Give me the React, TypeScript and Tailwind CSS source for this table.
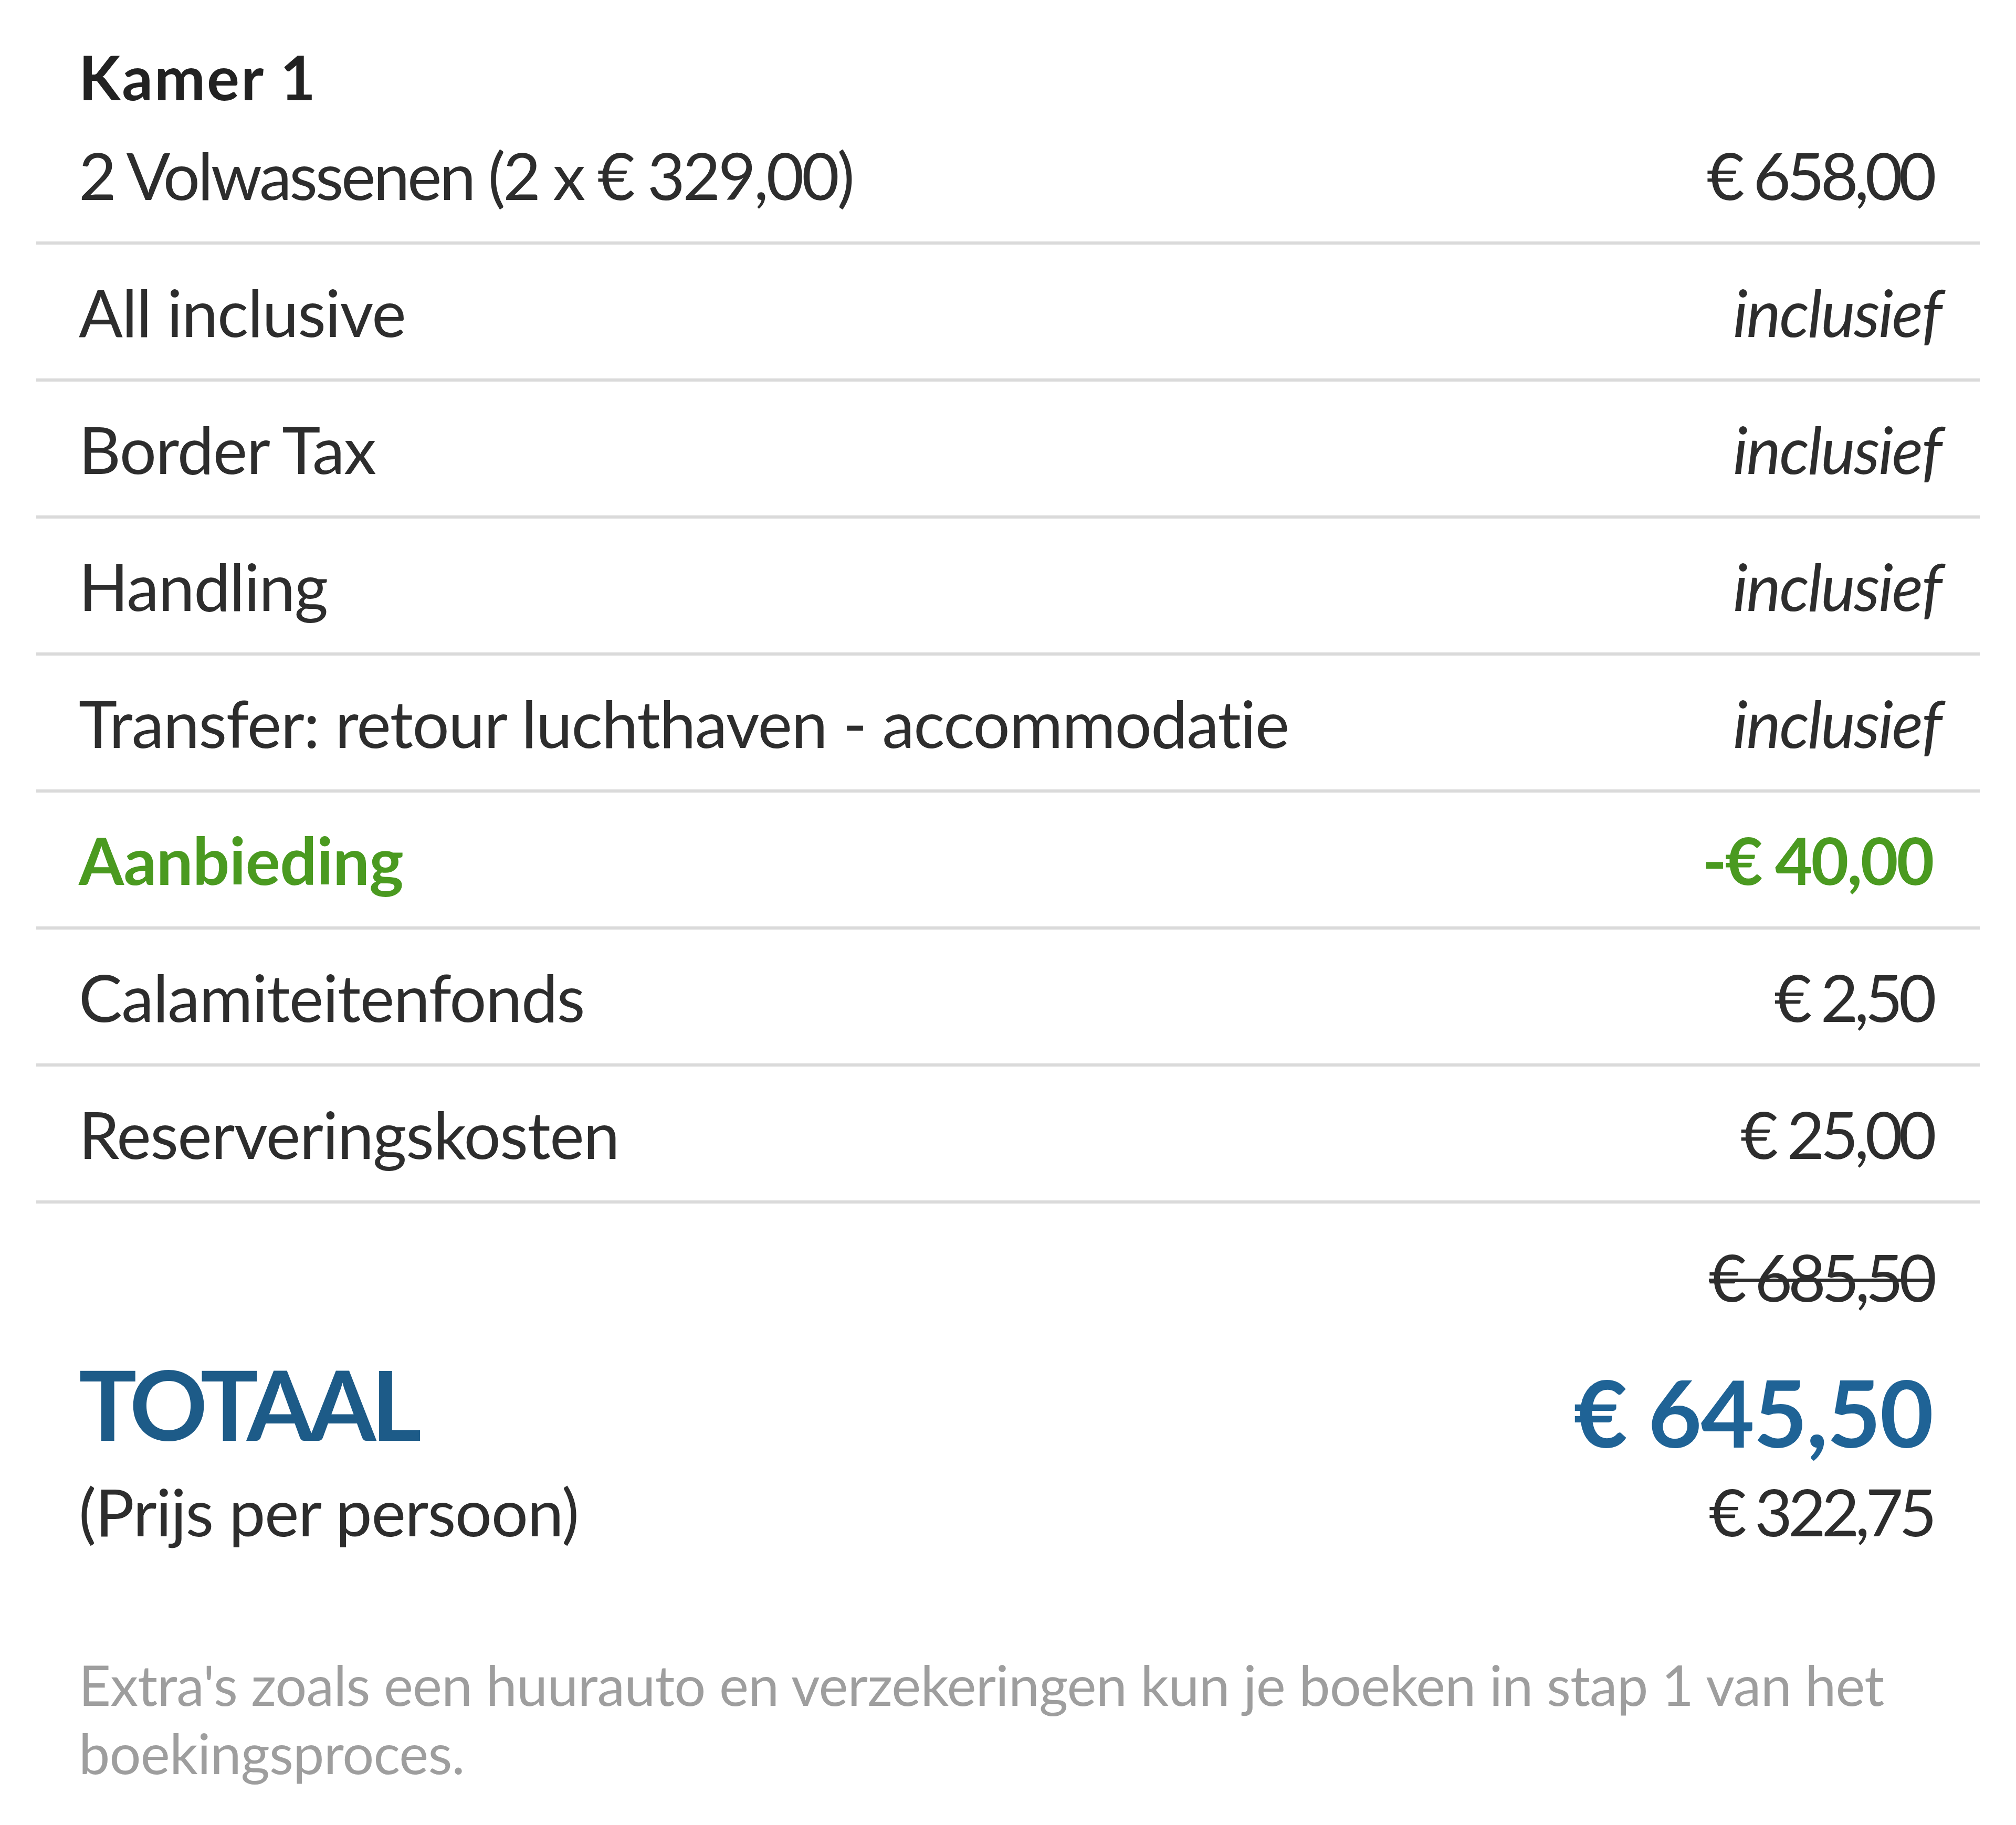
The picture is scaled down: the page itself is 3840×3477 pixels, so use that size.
import React from "react";

type RowProps = {
  label: string;
  value: string;
  variant?: "normal" | "italic" | "green";
};

function Row({ label, value, variant = "normal" }: RowProps) {
  const labelCls =
    variant === "green"
      ? "font-bold tracking-[-0.005em] text-[#4a9a20]"
      : "tracking-[-0.012em] text-[#2d2d2d]";
  const valueCls =
    variant === "green"
      ? "font-bold tracking-[-0.027em] text-[#4a9a20]"
      : variant === "italic"
      ? "-mr-[16px] italic tracking-[-0.022em] text-[#2d2d2d]"
      : "tracking-[-0.062em] text-[#2d2d2d]";
  return (
    <div className="flex h-[261px] items-center justify-between border-b-[6px] border-[#dadada] pl-[81px] pr-[90px] text-[124px] leading-[130px]">
      <span className={labelCls}>{label}</span>
      <span className={valueCls}>{value}</span>
    </div>
  );
}

export default function App() {
  return (
    <div className="min-h-[3477px] w-[3840px] bg-white px-[69px] [font-family:Lato,'Liberation_Sans',sans-serif]">
      {/* Header block */}
      <div className="border-b-[6px] border-[#dadada] pb-[62px] pl-[81px] pr-[90px] pt-[82px]">
        <div className="text-[116px] font-bold leading-[130px] tracking-[0.025em] text-[#222222]">Kamer 1</div>
        <div className="mt-[56px] flex items-center justify-between text-[124px] leading-[130px] text-[#2d2d2d]">
          <span className="tracking-[-0.035em]">2 Volwassenen (2 x € 329,00)</span>
          <span className="tracking-[-0.062em]">€ 658,00</span>
        </div>
      </div>

      <Row label="All inclusive" value="inclusief" variant="italic" />
      <Row label="Border Tax" value="inclusief" variant="italic" />
      <Row label="Handling" value="inclusief" variant="italic" />
      <Row label="Transfer: retour luchthaven - accommodatie" value="inclusief" variant="italic" />
      <Row label="Aanbieding" value="-€ 40,00" variant="green" />
      <Row label="Calamiteitenfonds" value="€ 2,50" />
      <Row label="Reserveringskosten" value="€ 25,00" />

      {/* Totals */}
      <div className="pl-[81px] pr-[90px]">
        <div className="mt-[74px] flex justify-end text-[124px] leading-[130px] text-[#2d2d2d]">
          <span className="tracking-[-0.066em] line-through decoration-[6px]">€ 685,50</span>
        </div>
        <div className="mt-[77px] flex h-[200px] items-start justify-between">
          <span className="text-[184px] font-bold leading-[200px] tracking-[-0.05em] text-[#1d5b88]">TOTAAL</span>
          <span className="mt-[32px] text-[177px] font-bold leading-[168px] tracking-[-0.012em] text-[#1f6396]">€ 645,50</span>
        </div>
        <div className="mt-[40px] flex items-center justify-between text-[124px] leading-[130px] text-[#2d2d2d]">
          <span className="tracking-[-0.012em]">(Prijs per persoon)</span>
          <span className="tracking-[-0.066em]">€ 322,75</span>
        </div>
        <p className="mt-[200px] pb-[73px] text-[106px] leading-[130px] tracking-[-0.008em] text-[#9e9e9e]">
          <span className="block whitespace-nowrap">
            Extra's zoals een huurauto en verzekeringen kun je boeken in stap 1 van het
          </span>
          <span className="block">boekingsproces.</span>
        </p>
      </div>
    </div>
  );
}
